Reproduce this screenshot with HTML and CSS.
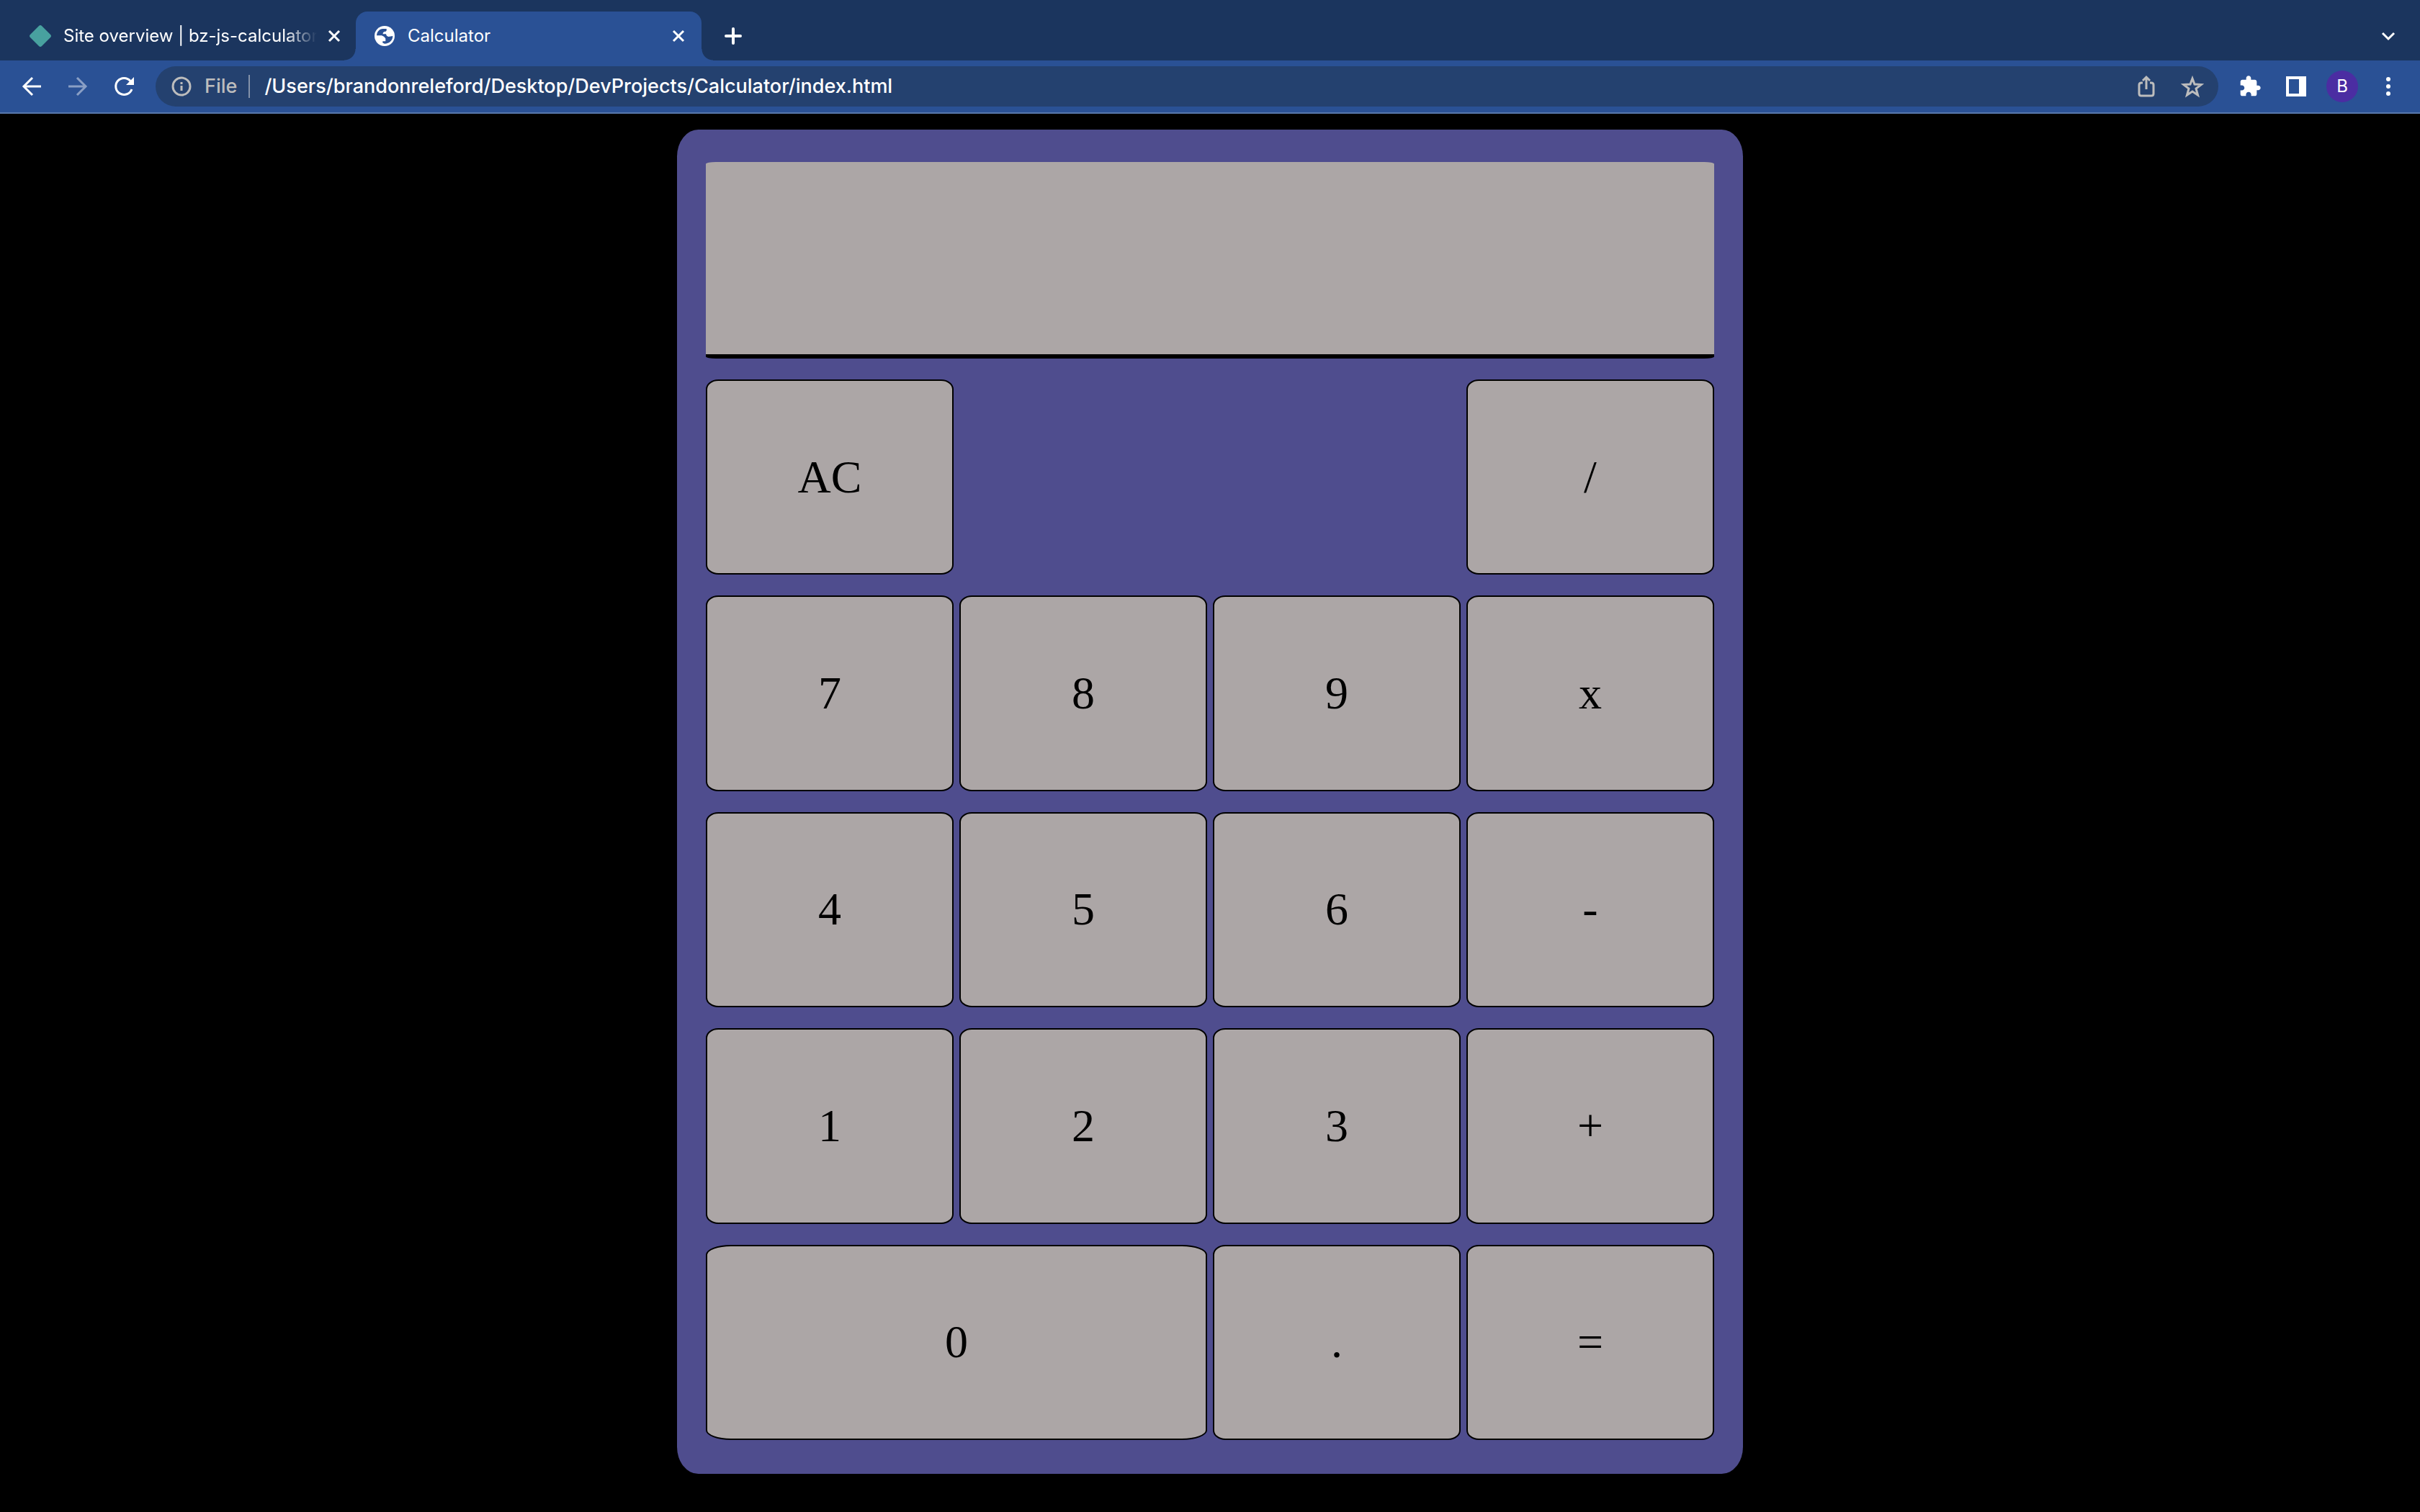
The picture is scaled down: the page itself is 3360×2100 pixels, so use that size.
FILE: index.html
```html
<!DOCTYPE html>
<html lang="en">
<head>
<meta charset="utf-8">
<meta name="viewport" content="width=device-width, initial-scale=1">
<title>Calculator</title>
<link rel="stylesheet" href="styles.css">
</head>
<body>
<header class="browser">
  <div class="tab-strip">
    <div class="tab">
      <svg class="favicon" viewBox="0 0 32 32" aria-hidden="true"><path d="M14 2q2-2 4 0l12 12q2 2 0 4L18 30q-2 2-4 0L2 18q-2-2 0-4z" fill="#48a19f"/></svg>
      <span class="tab-title tab-title-faded">Site overview | bz-js-calculator</span>
      <button class="tab-close" type="button" aria-label="Close Site overview"><svg class="icon" viewBox="0 0 32 32"><path class="line" d="M9 9l14 14M23 9L9 23"/></svg></button>
    </div>
    <div class="tab tab-active">
      <svg class="favicon" viewBox="0 0 32 32" aria-hidden="true"><circle cx="16" cy="16" r="14" fill="#fff"/><path d="M5 15.300C5.300 10 9 6 13.500 6H18.700V8.500Q18 10 15.500 10Q13.300 10.700 13.500 13.300H18Q18.700 16.700 21.500 17L27.300 16C27.300 22 22.700 26.700 16 26.700L13.300 25.500V23.300H17.300V19.500Q16 16.500 12 15.300Z" fill="#2a5195"/></svg>
      <span class="tab-title">Calculator</span>
      <button class="tab-close" type="button" aria-label="Close Calculator"><svg class="icon" viewBox="0 0 32 32"><path class="line" d="M9 9l14 14M23 9L9 23"/></svg></button>
    </div>
    <button class="tool new-tab" type="button" aria-label="New tab"><svg class="icon" viewBox="0 0 32 32"><path class="line line-bold" d="M16 6v20M6 16h20"/></svg></button>
    <button class="tool tab-search" type="button" aria-label="Search tabs"><svg class="icon" viewBox="0 0 32 32"><path class="line" d="M8 12l8 8 8-8"/></svg></button>
  </div>
  <nav class="toolbar">
    <button class="tool" type="button" aria-label="Back"><svg class="icon" viewBox="0 0 32 32"><path class="line" d="M29 16H5M17 4L5 16l12 12"/></svg></button>
    <button class="tool tool-disabled" type="button" aria-label="Forward" disabled><svg class="icon" viewBox="0 0 32 32"><path class="line" d="M3 16h24M15 4l12 12-12 12"/></svg></button>
    <button class="tool" type="button" aria-label="Reload"><svg class="icon" viewBox="0 0 32 32"><path class="line" d="M25 8.500A11.500 11.500 0 1 0 27 20"/><path d="M30 3v11H19z" fill="#fff"/></svg></button>
    <form class="omnibox">
      <svg class="icon" viewBox="0 0 32 32" aria-hidden="true"><circle cx="16" cy="16" r="12" fill="none" stroke="#bdbdbd" stroke-width="3"/><path d="M14.500 15h3v7h-3zM14.500 10h3v3h-3z" fill="#bdbdbd"/></svg>
      <label class="scheme" for="address">File</label>
      <input class="address" id="address" type="text" value="/Users/brandonreleford/Desktop/DevProjects/Calculator/index.html">
      <button class="tool" type="button" aria-label="Share"><svg class="icon" viewBox="0 0 32 32"><path class="muted" d="M11 11H9q-3 0-3 3v12q0 3 3 3h14q3 0 3-3V14q0-3-3-3h-2M16 20V4M11 8l5-5 5 5"/></svg></button>
      <button class="tool" type="button" aria-label="Bookmark this page"><svg class="icon" viewBox="0 0 32 32"><path class="muted" d="M16 5l3 8 9 .600-7 5.400 2.500 9L16 23l-7.500 5 2.500-9-7-5.400 9-.600z"/></svg></button>
    </form>
    <button class="tool" type="button" aria-label="Extensions"><svg class="icon" viewBox="0 0 24 24"><path d="M20.500 11H19V7c0-1.100-.900-2-2-2h-4V3.500C13 2.120 11.880 1 10.500 1S8 2.120 8 3.500V5H4c-1.100 0-1.990.900-1.990 2v3.800H3.500c1.490 0 2.700 1.210 2.700 2.700s-1.210 2.700-2.700 2.700H2V20c0 1.100.900 2 2 2h3.800v-1.500c0-1.490 1.210-2.700 2.700-2.700 1.490 0 2.700 1.210 2.700 2.700V22H17c1.100 0 2-.900 2-2v-4h1.500c1.380 0 2.500-1.120 2.500-2.500S21.880 11 20.500 11z" fill="#fff"/></svg></button>
    <button class="tool" type="button" aria-label="Side panel"><svg class="icon" viewBox="0 0 32 32"><path d="M2 2h28v28H2zM6 6v20h14V6z" fill="#fff" fill-rule="evenodd"/></svg></button>
    <button class="tool" type="button" aria-label="Profile"><span class="avatar">B</span></button>
    <button class="tool" type="button" aria-label="Menu"><svg class="icon" viewBox="0 0 32 32"><g fill="#fff"><circle cx="16" cy="6" r="3"/><circle cx="16" cy="16" r="3"/><circle cx="16" cy="26" r="3"/></g></svg></button>
  </nav>
</header>
<main class="page">
  <section class="calculator" aria-label="Calculator">
    <output class="display"></output>
    <button class="key" type="button">AC</button>
    <button class="key key-divide" type="button">/</button>
    <button class="key" type="button">7</button>
    <button class="key" type="button">8</button>
    <button class="key" type="button">9</button>
    <button class="key" type="button">x</button>
    <button class="key" type="button">4</button>
    <button class="key" type="button">5</button>
    <button class="key" type="button">6</button>
    <button class="key" type="button">-</button>
    <button class="key" type="button">1</button>
    <button class="key" type="button">2</button>
    <button class="key" type="button">3</button>
    <button class="key" type="button">+</button>
    <button class="key key-zero" type="button">0</button>
    <button class="key" type="button">.</button>
    <button class="key" type="button">=</button>
  </section>
</main>
</body>
</html>
```
FILE: styles.css
```css
* {
  box-sizing: border-box;
}

body {
  margin: 0;
  min-height: 100vh;
  display: flex;
  flex-direction: column;
  background: #000;
}

button,
input {
  margin: 0;
  padding: 0;
  border: 0;
  background: none;
  color: inherit;
  font: inherit;
}

/* Browser frame */
.browser {
  color: #fff;
  font-family: Inter, "Liberation Sans", sans-serif;
}

.tab-strip {
  display: flex;
  align-items: center;
  height: 84px;
  padding: 16px 16px 0;
  background: #1b355e;
}

.tab {
  display: flex;
  align-items: center;
  flex: 0 1 480px;
  min-width: 0;
  height: 68px;
  padding: 0 16px 0 24px;
}

.tab-active {
  position: relative;
  margin-left: -2px;
  border-radius: 16px 16px 0 0;
  background: #2a5195;
}

/* Outward curves where the active tab meets the toolbar */
.tab-active::before,
.tab-active::after {
  content: "";
  position: absolute;
  bottom: 0;
  width: 16px;
  height: 16px;
}

.tab-active::before {
  right: 100%;
  background: radial-gradient(circle at 0 0, #1b355e 15px, #2a5195 16px);
}

.tab-active::after {
  left: 100%;
  background: radial-gradient(circle at 100% 0, #1b355e 15px, #2a5195 16px);
}

.favicon,
.icon {
  display: block;
  flex: none;
  width: 32px;
  height: 32px;
}

.tab-title {
  flex: 1;
  min-width: 0;
  margin-left: 16px;
  overflow: hidden;
  font-size: 24px;
  line-height: 32px;
  white-space: nowrap;
}

.tab-title-faded {
  -webkit-mask-image: linear-gradient(to left, transparent 8px, #000 52px);
  mask-image: linear-gradient(to left, transparent 8px, #000 52px);
}

.tab-close {
  flex: none;
}

.line {
  fill: none;
  stroke: #fff;
  stroke-width: 3;
}

.line-bold {
  stroke-width: 4;
  stroke-linecap: round;
}

.muted {
  fill: none;
  stroke: #bdbdbd;
  stroke-width: 3;
}

.tool {
  display: flex;
  flex: none;
  align-items: center;
  justify-content: center;
  width: 56px;
  height: 56px;
}

.tool-disabled {
  opacity: 0.45;
}

.new-tab {
  margin-left: 16px;
}

.tab-search {
  margin-left: auto;
}

.toolbar {
  display: flex;
  align-items: center;
  gap: 8px;
  height: 74px;
  padding: 0 16px;
  border-bottom: 2px solid #5877ab;
  background: #2a5195;
}

.omnibox {
  display: flex;
  flex: 1;
  align-items: center;
  gap: 8px;
  min-width: 0;
  height: 56px;
  margin: 0 8px;
  padding: 0 8px 0 20px;
  border-radius: 28px;
  background: #24416f;
  font-size: 27px;
  font-weight: 500;
  line-height: 32px;
}

.scheme {
  padding: 0 16px 0 8px;
  border-right: 2px solid #8492a9;
  color: #bdbdbd;
}

.address {
  flex: 1;
  min-width: 0;
  padding-left: 12px;
}

.avatar {
  width: 44px;
  height: 44px;
  border-radius: 50%;
  background: #4b2da2;
  font-size: 24px;
  line-height: 44px;
  text-align: center;
}

/* Calculator */
.page {
  display: flex;
  flex: 1;
  justify-content: center;
  padding: 22px 16px 53px;
}

.calculator {
  display: grid;
  flex: 0 1 1480px;
  grid-template-rows: 273px repeat(5, 1fr);
  grid-template-columns: repeat(4, 1fr);
  gap: 29px 8px;
  padding: 45px 40px 47px;
  border-radius: 2%;
  background: #4f4d8e;
}

.display {
  grid-column: 1 / -1;
  border-bottom: 6px solid #000;
  border-radius: 1%;
  background: #aca6a6;
}

.key {
  border: 2px solid #000;
  border-radius: 5%;
  background: #aca6a6;
  color: #000;
  font-family: "Liberation Serif", "Times New Roman", serif;
  font-size: 64px;
}

.key-divide {
  grid-column: 4;
}

.key-zero {
  grid-column: span 2;
}
```
